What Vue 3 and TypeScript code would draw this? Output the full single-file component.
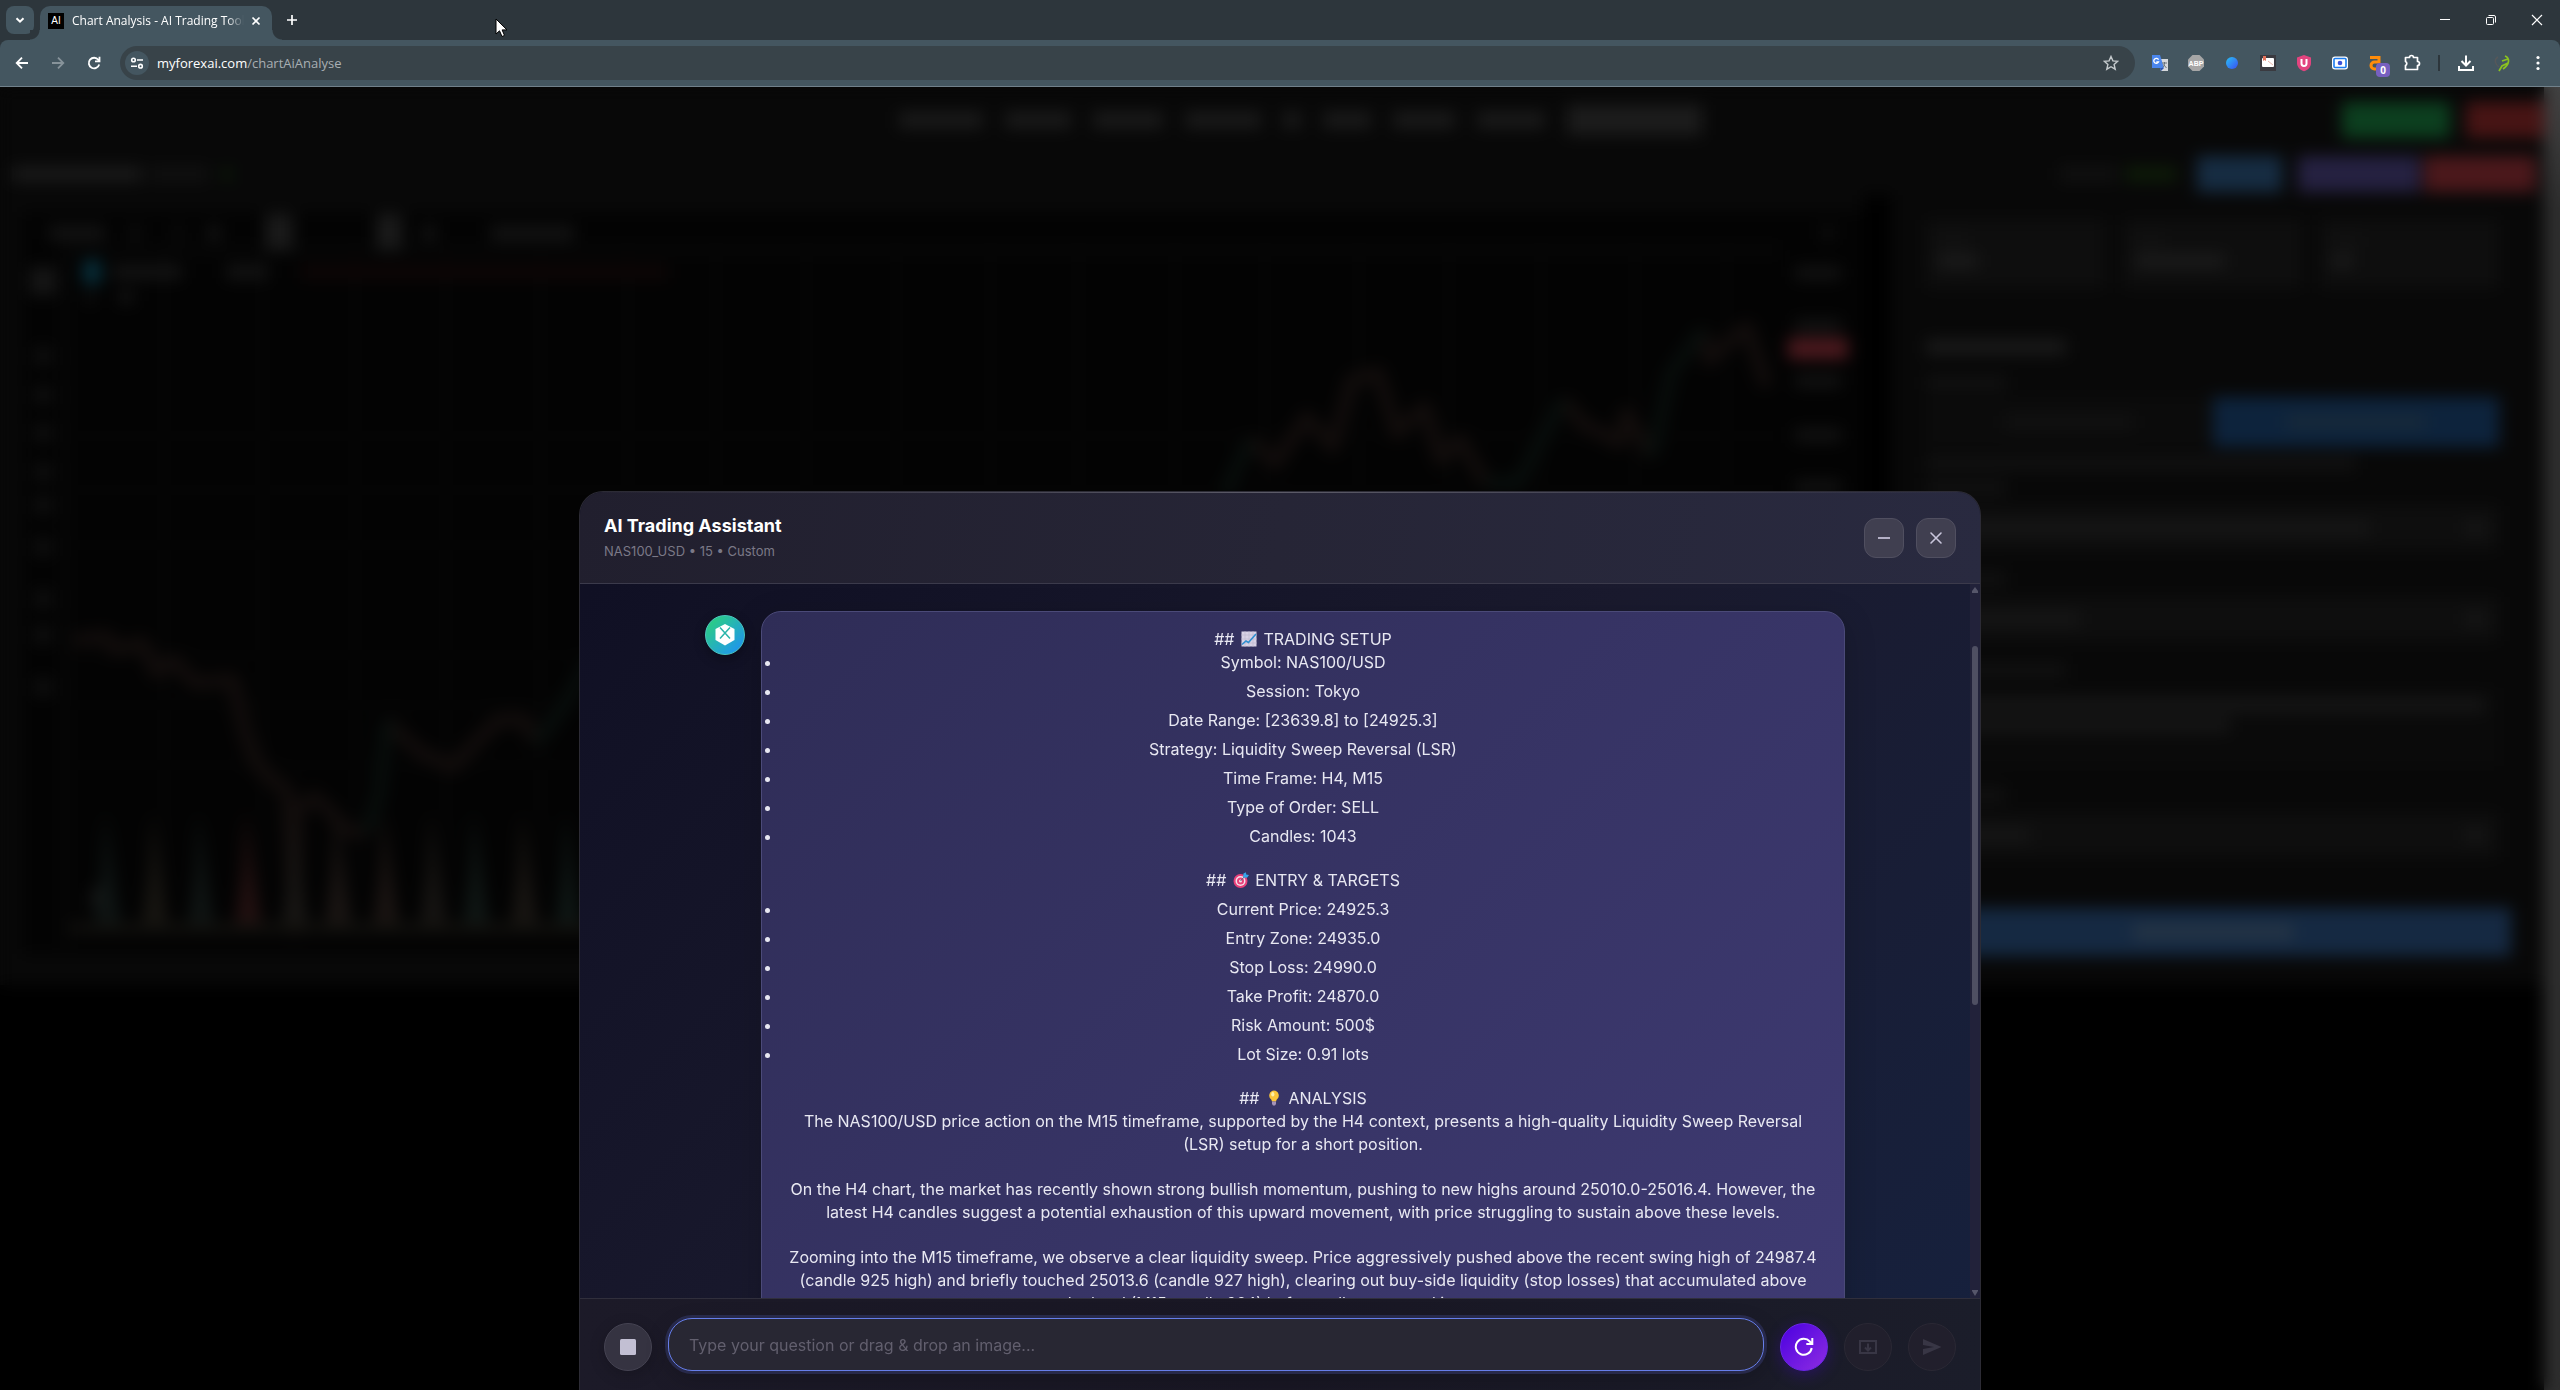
<script setup lang="ts">
import { ref } from 'vue'

type Glyph = 'setup' | 'target' | 'bulb'

interface Section {
  glyph: Glyph
  title: string
  items: string[]
}

const question = ref('')

const sections: Section[] = [
  {
    glyph: 'setup',
    title: 'TRADING SETUP',
    items: [
      'Symbol: NAS100/USD',
      'Session: Tokyo',
      'Date Range: [23639.8] to [24925.3]',
      'Strategy: Liquidity Sweep Reversal (LSR)',
      'Time Frame: H4, M15',
      'Type of Order: SELL',
      'Candles: 1043',
    ],
  },
  {
    glyph: 'target',
    title: 'ENTRY & TARGETS',
    items: [
      'Current Price: 24925.3',
      'Entry Zone: 24935.0',
      'Stop Loss: 24990.0',
      'Take Profit: 24870.0',
      'Risk Amount: 500$',
      'Lot Size: 0.91 lots',
    ],
  },
  { glyph: 'bulb', title: 'ANALYSIS', items: [] },
]

const paragraphs: string[] = [
  'The NAS100/USD price action on the M15 timeframe, supported by the H4 context, presents a high-quality Liquidity Sweep Reversal\n(LSR) setup for a short position.',
  'On the H4 chart, the market has recently shown strong bullish momentum, pushing to new highs around 25010.0-25016.4. However, the\nlatest H4 candles suggest a potential exhaustion of this upward movement, with price struggling to sustain above these levels.',
  'Zooming into the M15 timeframe, we observe a clear liquidity sweep. Price aggressively pushed above the recent swing high of 24987.4\n(candle 925 high) and briefly touched 25013.6 (candle 927 high), clearing out buy-side liquidity (stop losses) that accumulated above\nthe level (M15 candle 924) before sellers stepped in once more.',
]

const navWidths: number[] = [84, 66, 70, 76, 18, 48, 62, 68]
const gridX: number[] = [164, 262, 355, 446, 540, 628, 716, 806, 896, 990, 1078, 1174, 1264, 1358, 1448, 1540, 1634, 1726]
const gridY: number[] = [436, 490, 545, 655, 705, 765]
const toolY: number[] = [356, 395, 433, 472, 505, 547, 599, 635, 687]
const priceY: number[] = [273, 326, 381, 435, 487]
const volumes = [
  { x: 107, c: '#0e1413' }, { x: 154, c: '#171511' }, { x: 200, c: '#0f1413' },
  { x: 247, c: '#221010' }, { x: 294, c: '#181614' }, { x: 337, c: '#1a1513' },
  { x: 385, c: '#1a1412' }, { x: 432, c: '#161412' }, { x: 475, c: '#0f1614' },
  { x: 523, c: '#181512' }, { x: 567, c: '#0e1614' },
]
</script>

<template>
  <div class="window">
    <header class="chrome">
      <div class="tabs">
        <button class="tab-search" aria-label="Search tabs">
          <svg width="12" height="12" viewBox="0 0 12 12"><path d="M2.500 4.200 6 7.700 9.500 4.200" fill="none" stroke="#fff" stroke-width="2" /></svg>
        </button>
        <div class="tab">
          <span class="favicon">AI</span>
          <span class="tab-title">Chart Analysis - AI Trading Tools</span>
          <button class="plain" aria-label="Close tab">
            <svg width="10" height="10" viewBox="0 0 10 10"><path d="M1.500 1.500 8.500 8.500M8.500 1.500 1.500 8.500" stroke="#fff" stroke-width="1.700" /></svg>
          </button>
        </div>
        <button class="plain new-tab" aria-label="New tab">
          <svg width="12" height="12" viewBox="0 0 12 12"><path d="M6 1V11M1 6H11" stroke="#fff" stroke-width="1.700" /></svg>
        </button>
        <div class="window-controls">
          <button class="plain" aria-label="Minimise window">
            <svg width="12" height="12" viewBox="0 0 12 12"><path d="M1 5.500H11" stroke="#fff" /></svg>
          </button>
          <button class="plain" aria-label="Restore window">
            <svg width="12" height="12" viewBox="0 0 12 12" fill="none" stroke="#fff"><rect x="1.500" y="3.500" width="7" height="7" rx="1" /><path d="M3.500 1.500H9a1.500 1.500 0 0 1 1.500 1.500V8.500" /></svg>
          </button>
          <button class="plain" aria-label="Close window">
            <svg width="12" height="12" viewBox="0 0 12 12"><path d="M1 1 11 11M11 1 1 11" stroke="#fff" stroke-width="1.200" /></svg>
          </button>
        </div>
        <svg class="cursor" width="13" height="20" viewBox="0 0 13 20"><path d="M1 1V16L4.500 12.800 7 18.500 9.500 17.400 7.100 11.900H12Z" fill="#fff" stroke="#000" /></svg>
      </div>

      <div class="toolbar">
        <button class="plain nav-button" aria-label="Back">
          <svg width="16" height="16" viewBox="0 0 16 16" fill="none" stroke="#fff" stroke-width="1.800"><path d="M14 8H3M8 2.700 2.700 8 8 13.300" /></svg>
        </button>
        <button class="plain nav-button" aria-label="Forward">
          <svg width="16" height="16" viewBox="0 0 16 16" fill="none" stroke="#87939a" stroke-width="1.800"><path d="M2 8H13M8 2.700 13.300 8 8 13.300" /></svg>
        </button>
        <button class="plain nav-button" aria-label="Reload">
          <svg width="16" height="16" viewBox="0 0 16 16" fill="none" stroke="#fff" stroke-width="1.800"><path d="M13.200 9.500A5.300 5.300 0 1 1 12.300 4.800L13.300 6M13.500 1.800V6.300H9" /></svg>
        </button>
        <div class="address">
          <span class="site-info">
            <svg width="14" height="14" viewBox="0 0 14 14" fill="none" stroke="#fff" stroke-width="1.600"><circle cx="3.500" cy="4" r="1.800" /><path d="M7 4H13M1 10.200H7" /><circle cx="10.500" cy="10.200" r="1.800" /></svg>
          </span>
          <span class="url"><b>myforexai.com</b>/chartAiAnalyse</span>
          <button class="plain star" aria-label="Bookmark this page">
            <svg width="16" height="16" viewBox="0 0 16 16"><path d="M8 1.500 9.900 5.900 14.700 6.300 11.100 9.500 12.200 14.200 8 11.700 3.800 14.200 4.900 9.500 1.300 6.300 6.100 5.900Z" fill="none" stroke="#c5cacd" stroke-width="1.400" /></svg>
          </button>
        </div>
        <div class="extensions">
          <svg width="18" height="18" viewBox="0 0 18 18"><path d="M7 5H17V17H10Z" fill="#d5d8dc" /><path d="M1 1H9L13 14H1Z" fill="#4a86ee" /><path d="M9 14H13L10 17Z" fill="#2b55b5" /><path d="M8 6.700A2.500 2.500 0 1 0 8 9H5.800" fill="none" stroke="#fff" stroke-width="1.300" transform="translate(-.5 -1)" /><path d="M11 9H16M13.500 8V9C13.500 11 13 12.500 11.500 13.500M12.500 10.500 15.500 14" fill="none" stroke="#66707a" /></svg>
          <svg width="18" height="18" viewBox="0 0 18 18"><path d="M5.500 1H12.500L17 5.500V12.500L12.500 17H5.500L1 12.500V5.500Z" fill="#a6a6a6" /><text x="9" y="11.500" text-anchor="middle" font-family="Liberation Sans" font-size="7" font-weight="700" fill="#fff">ABP</text></svg>
          <svg width="18" height="18" viewBox="0 0 18 18"><defs><linearGradient id="orb" x1="0" y1="0" x2="1" y2="1"><stop stop-color="#28c3f5" /><stop offset="1" stop-color="#3b4df2" /></linearGradient></defs><circle cx="9" cy="9" r="6" fill="url(#orb)" /></svg>
          <svg width="18" height="18" viewBox="0 0 18 18"><rect x="1" y="1" width="16" height="16" fill="#3a3a40" /><rect x="3" y="4" width="12" height="9" rx="1" fill="#fff" /><path d="M4 2H7V7L5.500 6 4 7Z" fill="#e2725b" /><path d="M9 7 14 11" stroke="#e9b5ac" /></svg>
          <svg width="18" height="18" viewBox="0 0 18 18"><path d="M9 1 16 3.500V9C16 13 13 16 9 17.300 5 16 2 13 2 9V3.500Z" fill="#e2447f" /><path d="M6.500 5V9.500A2.500 2.500 0 0 0 11.500 9.500V5" fill="none" stroke="#fff" stroke-width="2" /></svg>
          <svg width="18" height="18" viewBox="0 0 18 18"><rect x="1" y="2.500" width="16" height="13" rx="3" fill="#fff" /><rect x="3" y="4.500" width="12" height="9" rx="1" fill="#fff" stroke="#1c7df0" stroke-width="1.600" /><circle cx="9" cy="9" r="2.300" fill="#3c53d8" /></svg>
          <span class="badged">
            <svg width="18" height="18" viewBox="0 0 18 18"><path d="M3 3.500H12V8H7.500A3 3 0 0 0 7.500 15H12" fill="none" stroke="#ff8c0a" stroke-width="3" /></svg>
            <em>0</em>
          </span>
          <svg width="18" height="18" viewBox="0 0 18 18"><path d="M2.500 3.500H6.500A2 2 0 0 1 10.500 3.500H14.500V7.500A2 2 0 0 1 14.500 11.500V15.500H2.500V11.500A2.200 2.200 0 0 0 2.500 7.500Z" fill="none" stroke="#fff" stroke-width="1.700" stroke-linejoin="round" /></svg>
        </div>
        <i class="divider"></i>
        <div class="extensions tail">
          <svg width="18" height="18" viewBox="0 0 18 18" fill="none" stroke="#fff" stroke-width="2"><path d="M9 1.500V11M4.500 7 9 11.500 13.500 7M2 12V16H16V12" /></svg>
          <svg width="18" height="18" viewBox="0 0 18 18" fill="none"><path d="M5 3C0 6 3 11 6 13" stroke="#56585a" stroke-width="1.500" /><path d="M12 2C17 4 17 10 10 15M15 5 9 7M15 9 9 12 6 17" stroke="#8bc21f" stroke-width="1.700" /></svg>
          <svg width="18" height="18" viewBox="0 0 18 18" fill="#fff"><circle cx="9" cy="3.500" r="1.600" /><circle cx="9" cy="9" r="1.600" /><circle cx="9" cy="14.500" r="1.600" /></svg>
        </div>
      </div>
    </header>

    <div class="viewport">
      <div class="site" aria-hidden="true">
        <div class="site-content">
          <div class="site-nav">
            <div class="site-links">
              <i v-for="(w, n) in navWidths" :key="n" class="bar" :style="{ width: w + 'px' }"></i>
              <i class="bar active"></i>
            </div>
            <div class="site-account"><i class="pill green"></i><i class="pill red"></i></div>
          </div>
          <div class="site-sub">
            <i class="bar w130"></i><i class="bar faint w58"></i><i class="dot"></i>
            <span class="grow"></span>
            <i class="bar faint w58"></i><i class="bar lime"></i>
            <i class="pill blue"></i><i class="pill purple"></i><i class="pill crimson"></i>
          </div>
          <div class="site-main">
            <svg class="price-chart" viewBox="0 195 1863 782" preserveAspectRatio="none">
              <rect x="22" y="212" width="1841" height="742" fill="#030303" />
              <rect x="60" y="245" width="1720" height="10" fill="#070707" />
              <path v-for="x in gridX" :key="'x' + x" :d="`M${x} 255V925`" stroke="#070707" stroke-width="4" />
              <path v-for="y in gridY" :key="'y' + y" :d="`M70 ${y}H1780`" stroke="#060606" stroke-width="4" />
              <rect x="60" y="255" width="10" height="690" fill="#070707" />
              <g fill="#141414">
                <rect x="49" y="226" width="56" height="14" /><rect x="131" y="226" width="8" height="14" />
                <rect x="175" y="226" width="6" height="14" /><rect x="207" y="226" width="14" height="14" />
                <rect x="265" y="214" width="28" height="36" fill="#1a1a1a" /><rect x="376" y="214" width="26" height="36" fill="#1a1a1a" />
                <rect x="422" y="226" width="14" height="14" /><rect x="490" y="226" width="84" height="14" />
                <rect x="30" y="267" width="26" height="28" fill="#161616" />
                <rect x="112" y="265" width="70" height="14" /><rect x="226" y="265" width="42" height="14" />
                <rect x="86" y="291" width="8" height="12" /><rect x="118" y="291" width="16" height="12" />
                <rect v-for="y in toolY" :key="'t' + y" x="35" :y="y - 9" width="16" height="18" fill="#101010" />
                <rect v-for="y in priceY" :key="'p' + y" x="1794" :y="y - 6" width="46" height="12" />
                <rect x="92" y="888" width="22" height="22" fill="#1c1c1c" />
                <rect x="1820" y="226" width="14" height="14" fill="#0d0d0d" />
              </g>
              <rect x="83" y="260" width="18" height="24" fill="#07303c" />
              <rect x="300" y="265" width="368" height="14" fill="#0e0606" />
              <rect x="1787" y="338" width="60" height="21" fill="#4c191e" />
              <g fill="none" stroke="#120d0c" stroke-width="14" stroke-linejoin="round">
                <path d="M73 640 107 637 115 650 142 643 157 673 172 660 195 683 233 680 245 733 256 763 272 780 287 790 295 930 297 810 314 797 329 810 344 830 367 833" />
                <path d="M387 720 398 733 421 753 452 767 478 740 498 720 524 720 536 743" />
                <path d="M1249 440 1275 463 1306 417 1332 447 1351 380 1377 373 1396 433 1424 407 1440 460 1459 440 1485 483" />
                <path d="M1562 400 1581 423 1619 443 1625 413 1651 457M1702 330 1708 360 1746 327 1766 387" />
              </g>
              <g fill="none" stroke="#080e0c" stroke-width="13">
                <path d="M367 833 379 793 387 720M536 743 559 713 590 660M1224 495 1249 440M1485 483 1517 483 1562 400M1651 457 1670 373 1702 330" />
              </g>
              <path v-for="v in volumes" :key="v.x" :d="`M${v.x - 13} 932 ${v.x - 5} 870 ${v.x - 2} 810 ${v.x + 6} 870 ${v.x + 15} 932Z`" :fill="v.c" />
              <rect x="70" y="923" width="1710" height="10" fill="#12110e" />
            </svg>
            <div class="gutter"></div>
            <div class="side">
              <div class="stats">
                <div><i class="bar faint"></i><i class="bar w40"></i></div>
                <div><i class="bar faint"></i><i class="bar w90"></i></div>
                <div><i class="bar faint"></i><i class="bar w20"></i></div>
              </div>
              <i class="bar w140"></i>
              <i class="bar faint spaced w80"></i>
              <div class="switch"><span><i class="bar faint w130"></i></span><span class="on"><i class="bar w140"></i></span></div>
              <i class="bar faint w430"></i>
              <i class="bar faint w80"></i>
              <div class="field"><i class="bar w430"></i><i class="bar w20"></i></div>
              <i class="bar faint spaced w80"></i>
              <div class="field"><i class="bar w140"></i><i class="bar w20"></i></div>
              <i class="bar faint spaced w140"></i>
              <div class="field tall"><i class="bar full"></i><i class="bar w290"></i></div>
              <i class="bar faint spaced w80"></i>
              <div class="field"><i class="bar w90"></i><i class="bar w20"></i></div>
              <div class="submit"><i class="bar"></i></div>
            </div>
          </div>
        </div>
        <div class="site-scroll"></div>
      </div>

      <div class="overlay">
        <section class="modal" aria-labelledby="assistant-title">
          <header class="modal-head">
            <div>
              <h1 id="assistant-title">AI Trading Assistant</h1>
              <p>NAS100_USD • 15 • Custom</p>
            </div>
            <div class="head-actions">
              <button aria-label="Minimise"><svg width="14" height="14" viewBox="0 0 14 14"><path d="M1 7H13" stroke="#b4b0c6" stroke-width="2" /></svg></button>
              <button aria-label="Close"><svg width="14" height="14" viewBox="0 0 14 14"><path d="M2 2 12 12M12 2 2 12" stroke="#c9c6dc" stroke-width="1.600" stroke-linecap="round" /></svg></button>
            </div>
          </header>

          <div class="modal-body">
            <div class="scroll">
              <article class="message">
                <span class="avatar">
                  <svg width="22" height="24" viewBox="0 0 22 24"><path d="M11 1 20.500 6V17L11 22.500 1.500 17V6Z" fill="#fff" /><path d="M6 4.500 16 15.500M16 4.500 6 15.500" stroke="#2ab5ab" stroke-width="1.500" /></svg>
                </span>
                <div class="bubble">
                  <template v-for="section in sections" :key="section.title">
                    <h2 :class="section.glyph">
                      ##
                      <svg v-if="section.glyph === 'setup'" width="16" height="16" viewBox="0 0 16 16"><rect x=".5" y=".5" width="15" height="15" fill="#d9d3e6" /><path d="M4 0V16M8 0V16M12 0V16M0 4H16M0 8H16M0 12H16" stroke="#bdb7cf" stroke-width=".6" /><path d="M1 13.500 5 10 7.500 11.500 15 3" fill="none" stroke="#2f8fd0" stroke-width="1.600" /></svg>
                      <svg v-else-if="section.glyph === 'target'" width="16" height="16" viewBox="0 0 16 16"><circle cx="7.500" cy="9" r="7" fill="#e8407a" /><circle cx="7.500" cy="9" r="5" fill="#f5dfea" /><circle cx="7.500" cy="9" r="3.500" fill="#e8407a" /><circle cx="7.500" cy="9" r="1.500" fill="#f5dfea" /><path d="M7.500 9 12 4" stroke="#5b5f78" stroke-width="1" /><path d="M10 5.500 10.500 1.500 13 .2 13.200 2.500 16 3 14 5.800Z" fill="#35a5e8" /></svg>
                      <svg v-else width="16" height="16" viewBox="0 0 16 16"><path d="M8 .5A5 5 0 0 1 11.300 9C10.500 9.800 10.200 10.500 10.100 11.500H5.900C5.800 10.500 5.500 9.800 4.700 9A5 5 0 0 1 8 .5Z" fill="#fcc63b" /><ellipse cx="6.800" cy="4.300" rx="1.600" ry="2.300" fill="#fff0a8" /><path d="M6 11.500H10V14L9 15.500H7L6 14Z" fill="#a593b8" /></svg>
                      {{ section.title }}
                    </h2>
                    <ul v-if="section.items.length">
                      <li v-for="item in section.items" :key="item">{{ item }}</li>
                    </ul>
                  </template>
                  <p v-for="text in paragraphs" :key="text">{{ text }}</p>
                </div>
              </article>
            </div>
            <div class="scrollbar" aria-hidden="true">
              <svg width="6" height="6" viewBox="0 0 6 6"><path d="M3 0 6 4V6H0V4Z" fill="#56566a" /></svg>
              <i class="track-before"></i><i class="thumb"></i><i class="track-after"></i>
              <svg width="6" height="6" viewBox="0 0 6 6"><path d="M0 0H6V1L3 6 0 1Z" fill="#56566a" /></svg>
            </div>
          </div>

          <form class="composer" @submit.prevent>
            <button type="button" class="round stop" aria-label="Stop"><svg width="16" height="16" viewBox="0 0 16 16"><rect width="16" height="16" rx="1.500" fill="#c2bfd3" /></svg></button>
            <input v-model="question" type="text" aria-label="Your question" placeholder="Type your question or drag &amp; drop an image..." />
            <button type="button" class="round refresh" aria-label="Regenerate">
              <svg width="20" height="20" viewBox="0 0 20 20" fill="none" stroke="#fff" stroke-width="2"><path d="M17.700 11A8 8 0 1 1 15.800 4.500L18 7M18.300 1V7H12.300" /></svg>
            </button>
            <button type="button" class="round" disabled aria-label="Attach image">
              <svg width="18" height="16" viewBox="0 0 18 16" fill="none" stroke="#383645" stroke-width="2"><rect x="1" y="2" width="16" height="12" /><path d="M9 4.500V11M6 8.500 9 11.500 12 8.500" /></svg>
            </button>
            <button type="submit" class="round" disabled aria-label="Send">
              <svg width="20" height="18" viewBox="0 0 20 18"><path d="M1 1 19.500 9 1 17V11L12 9 1 7Z" fill="#383645" /></svg>
            </button>
          </form>
        </section>
      </div>
    </div>
  </div>
</template>

<style>
html,
body {
  background: #000;
}
</style>

<style scoped>
* {
  box-sizing: border-box;
}
.window {
  display: flex;
  flex-direction: column;
  height: 100vh;
  overflow: hidden;
  font-family: Inter, "Open Sans", sans-serif;
}
button {
  display: flex;
  align-items: center;
  justify-content: center;
  padding: 0;
  border: 0;
  background: none;
}
svg {
  display: block;
  flex: none;
}
h1,
h2,
p,
ul {
  margin: 0;
  padding: 0;
}

/* Browser frame */
.chrome {
  flex: none;
  background: #2d363c;
  font-family: "Open Sans", "Noto Sans", sans-serif;
  color: #fff;
}
.tabs {
  position: relative;
  display: flex;
  align-items: center;
  height: 40px;
  padding-left: 6px;
}
.tab-search {
  width: 28px;
  height: 28px;
  border-radius: 8px;
  background: #445660;
}
.tab {
  display: flex;
  align-items: center;
  align-self: flex-end;
  width: 232px;
  height: 34px;
  margin-left: 6px;
  padding: 0 11px 4px 8px;
  border-radius: 10px 10px 0 0;
  background: #445660;
  position: relative;
}
.tab::before,
.tab::after {
  content: "";
  position: absolute;
  bottom: 0;
  width: 10px;
  height: 10px;
}
.tab::before {
  right: 100%;
  background: radial-gradient(circle at 0 0, #2d363c 9px, #445660 10px);
}
.tab::after {
  left: 100%;
  background: radial-gradient(circle at 100% 0, #2d363c 9px, #445660 10px);
}
.favicon {
  width: 16px;
  height: 16px;
  background: #000;
  font: 400 10px/16px "Liberation Sans", sans-serif;
  text-align: center;
}
.tab-title {
  flex: 1;
  margin: 0 7px 0 8px;
  overflow: hidden;
  font-size: 12px;
  line-height: 16px;
  white-space: nowrap;
  mask-image: linear-gradient(90deg, #000 90%, transparent);
}
.new-tab {
  margin-left: 14px;
}
.window-controls {
  display: flex;
  gap: 34px;
  margin-left: auto;
  padding-right: 17px;
}
.cursor {
  position: absolute;
  top: 18px;
  left: 495px;
}
.toolbar {
  display: flex;
  align-items: center;
  height: 47px;
  padding: 0 13px 0 14px;
  border-bottom: 1px solid #71818b;
  border-radius: 8px 8px 0 0;
  background: #445660;
}
.nav-button {
  width: 16px;
  margin-right: 20px;
}
.address {
  display: flex;
  flex: 1;
  align-items: center;
  height: 34px;
  margin-left: -2px;
  padding: 0 16px 0 5px;
  border-radius: 17px;
  background: #384349;
}
.site-info {
  display: grid;
  place-items: center;
  width: 24px;
  height: 24px;
  border-radius: 50%;
  background: #445660;
}
.url {
  margin-left: 8px;
  color: #a9afb3;
  font-size: 13px;
  line-height: 20px;
}
.url b {
  color: #fff;
  font-weight: 400;
}
.star {
  margin-left: auto;
}
.extensions {
  display: flex;
  gap: 18px;
  margin-left: 16px;
}
.badged {
  position: relative;
}
.badged em {
  position: absolute;
  top: 9px;
  left: 9px;
  width: 14px;
  height: 14px;
  border-radius: 4px;
  background: #7760c0;
  font: 700 10px/14px "Open Sans", sans-serif;
  text-align: center;
}
.divider {
  width: 2px;
  height: 16px;
  margin-left: 17px;
  background: #2d363c;
}
.tail {
  margin-left: 17px;
}

/* Site behind the dialog */
.viewport {
  position: relative;
  flex: 1;
  min-height: 0;
  overflow: hidden;
}
.site {
  display: flex;
  height: 100%;
}
.site-content {
  flex: 1;
}
.site-scroll {
  width: 16px;
  background: linear-gradient(#424242, #2e2e2e 120px);
}
.bar {
  display: block;
  height: 14px;
  background: #1b1b1b;
}
.faint {
  background: #111;
}
.w20 { width: 20px; }
.w40 { width: 40px; }
.w58 { width: 58px; }
.w80 { width: 80px; }
.w90 { width: 90px; }
.w130 { width: 130px; }
.w140 { width: 140px; }
.w290 { width: 290px; }
.w430 { width: 430px; }
.full { width: 100%; }
.grow {
  flex: 1;
}
.pill {
  width: 108px;
  height: 36px;
}
.site-nav,
.site-sub {
  display: flex;
  align-items: center;
  background: #080808;
}
.site-nav {
  justify-content: flex-end;
  height: 66px;
}
.site-links {
  display: flex;
  align-items: center;
  gap: 22px;
}
.site-links .bar {
  height: 16px;
}
.site-links .active {
  width: 135px;
  height: 30px;
  background: #1c1c1c;
}
.site-account {
  display: flex;
  justify-content: flex-end;
  gap: 16px;
  width: 842px;
}
.pill.green { background: #0c3f1f; }
.pill.red { width: 78px; background: #471414; }
.pill.blue { width: 85px; margin-left: 12px; background: #162c42; }
.pill.purple { width: 122px; margin-left: 8px; background: #252141; }
.pill.crimson { width: 112px; margin-left: -4px; background: #4b181b; }
.lime { width: 52px; background: #0e1d08; }
.site-sub {
  gap: 8px;
  height: 42px;
  padding: 0 8px 0 12px;
}
.dot {
  width: 10px;
  height: 10px;
  margin-left: 6px;
  background: #0c1f0a;
}
.site-main {
  display: flex;
  height: 790px;
  background: #080808;
}
.price-chart {
  flex: 1;
  width: 0;
  height: 782px;
}
.gutter {
  width: 27px;
  background: #000;
}
.side {
  display: flex;
  flex-direction: column;
  gap: 11px;
  width: 653px;
  padding: 25px 45px 0 35px;
  background: #080808;
}
.side .spaced {
  margin-top: 11px;
}
.stats {
  display: grid;
  grid-template-columns: repeat(3, 1fr);
  gap: 18px;
  margin-bottom: 41px;
}
.stats div {
  display: flex;
  flex-direction: column;
  gap: 6px;
  height: 68px;
  padding: 14px 12px;
  background: #0e0e0e;
}
.stats .faint {
  width: 30px;
}
.switch {
  display: flex;
  height: 50px;
  margin: -4px 0 -2px;
}
.switch span {
  display: grid;
  flex: 1;
  place-items: center;
  background: #0b0b0b;
}
.switch .on {
  background: #0d233c;
}
.switch .on .bar {
  background: #182939;
}
.field {
  display: flex;
  align-items: center;
  justify-content: space-between;
  height: 44px;
  padding: 0 14px;
  background: #0e0e0e;
}
.field.tall {
  flex-direction: column;
  align-items: flex-start;
  justify-content: flex-start;
  gap: 6px;
  height: 78px;
  padding-top: 10px;
  background: #0a0a0a;
}
.field .bar {
  background: #161616;
}
.submit {
  display: grid;
  place-items: center;
  height: 48px;
  margin: 40px -12px 0;
  background: #152942;
}
.submit .bar {
  width: 160px;
  background: #263545;
}

/* Dialog */
.overlay {
  position: absolute;
  inset: 0;
  display: flex;
  justify-content: center;
  padding-top: 404px;
  backdrop-filter: blur(8px);
}
.modal {
  display: flex;
  flex-direction: column;
  width: 100%;
  max-width: 1402px;
  border: 1px solid #2c2b35;
  border-bottom: 0;
  border-radius: 24px 24px 0 0;
  background: linear-gradient(135deg, #0f0f23, #1a1a2e 50%, #16213e);
  overflow: hidden;
}
.modal-head {
  position: relative;
  display: flex;
  align-items: center;
  justify-content: space-between;
  flex: none;
  height: 92px;
  padding: 0 24px;
  border-bottom: 1px solid #3b3a4b;
  background: linear-gradient(100deg, #211f2e, #262536 50%, #292a40);
}
.modal-head::before {
  content: "";
  position: absolute;
  top: 0;
  left: 0;
  right: 0;
  height: 1px;
  background: linear-gradient(90deg, transparent, #5c5b68, transparent);
}
h1 {
  color: #fff;
  font-size: 18px;
  font-weight: 700;
  line-height: 24px;
}
.modal-head p {
  margin-top: 2px;
  color: #7b7987;
  font-size: 13px;
  line-height: 22px;
}
.head-actions {
  display: flex;
  gap: 12px;
}
.head-actions button {
  width: 40px;
  height: 40px;
  border: 1px solid #504f60;
  border-radius: 12px;
  background: #403f50;
}
.modal-body {
  display: flex;
  flex: 1;
  min-height: 0;
}
.scroll {
  flex: 1;
  min-height: 0;
  overflow: hidden;
  padding: 27px 24px 0;
}
.message {
  display: flex;
  gap: 16px;
  max-width: 1140px;
  margin: 0 auto;
}
.avatar {
  display: grid;
  flex: none;
  place-items: center;
  width: 40px;
  height: 40px;
  margin-top: 4px;
  border: 1px solid #4cc7c0;
  border-radius: 50%;
  background: linear-gradient(135deg, #2ed573, #1e90ff);
  box-shadow: 0 4px 12px rgba(0, 0, 0, 0.3);
}
.bubble {
  flex: 1;
  min-width: 0;
  padding: 16px 20px;
  border: 1px solid #4b4a78;
  border-radius: 20px;
  background: linear-gradient(135deg, #2f2d57, #3e3a72);
  box-shadow: 0 8px 32px rgba(0, 0, 0, 0.2);
  color: #e8e8f2;
  font-size: 16px;
  line-height: 23px;
  text-align: center;
}
.bubble h2 {
  font-size: 16px;
  font-weight: 400;
  line-height: 23px;
}
.bubble h2 svg {
  display: inline-block;
  margin: 0 2px;
  vertical-align: -2px;
}
.bubble h2.target {
  margin-bottom: 6px;
}
.bubble li + li {
  margin-top: 6px;
}
.bubble ul {
  margin-bottom: 21px;
}
.bubble p {
  white-space: pre-line;
}
.bubble p + p {
  margin-top: 22px;
}
.scrollbar {
  display: flex;
  flex-direction: column;
  align-items: center;
  width: 10px;
  padding: 3px 0 2px;
  background: #22223a;
}
.thumb {
  flex: 359;
  width: 6px;
  border-radius: 3px;
  background: #4f4f62;
}
.track-before {
  flex: 53;
}
.track-after {
  flex: 285;
}
.composer {
  display: flex;
  flex: none;
  align-items: flex-end;
  gap: 16px;
  padding: 19px 24px;
  border-top: 1px solid #302f3c;
  background: linear-gradient(90deg, #1c1a28, #191724 50%, #1b1d2a);
}
.round {
  flex: none;
  width: 48px;
  height: 48px;
  border: 1px solid #2a2834;
  border-radius: 50%;
  background: #211f2c;
}
.round.stop {
  border-color: #454352;
  background: #353341;
  box-shadow: 0 4px 16px rgba(0, 0, 0, 0.2);
}
.round.refresh {
  border-color: #6a25e8;
  background: linear-gradient(135deg, #4a00e0, #8e2de2);
  box-shadow: 0 4px 16px rgba(74, 0, 224, 0.3);
}
input {
  flex: 1;
  min-width: 0;
  height: 53px;
  padding: 0 20px;
  border: 1px solid #667eea;
  border-radius: 24px;
  outline: 0;
  background: #282733;
  box-shadow: 0 0 0 3px #27294a, 0 8px 24px rgba(0, 0, 0, 0.2);
  color: #fff;
  font: 400 16px/24px Inter, sans-serif;
}
input::placeholder {
  color: #625f6e;
  opacity: 1;
}
</style>
